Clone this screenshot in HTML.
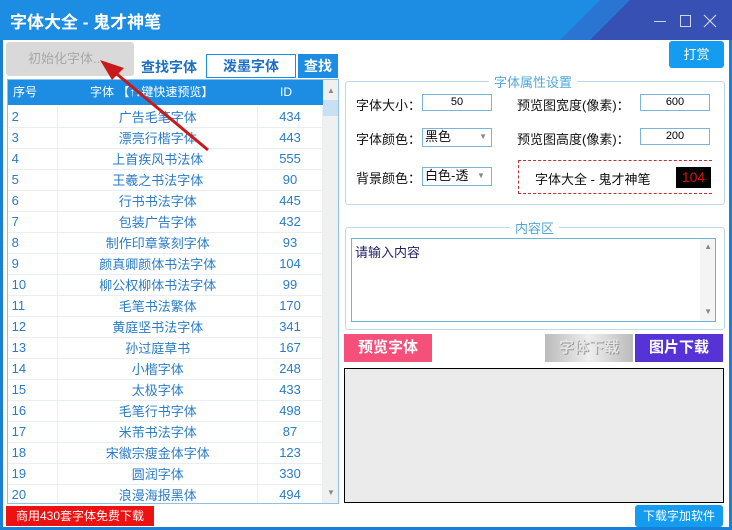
<!DOCTYPE html>
<html><head><meta charset="utf-8"><style>
*{margin:0;padding:0;box-sizing:border-box}
body{width:732px;height:530px;overflow:hidden;background:#1a7fd6;font-family:"Liberation Sans","Noto Sans CJK SC",sans-serif;position:relative}
.a{position:absolute}
#title{left:0;top:0;width:732px;height:40px;background:#1d8de3;overflow:hidden}
#body{left:3px;top:40px;width:726px;height:487px;background:#fff}
table{border-collapse:collapse;font-size:13px;color:#2a7cc8}
td{height:21px;border-bottom:1px solid #e8eef4;border-right:1px solid #e8eef4;padding:0}
.lbl{font-size:13px;color:#111}
.inp{border:1px solid #7ab4dc;height:17px;font-size:11px;text-align:center;line-height:15px;background:#fff}
.fs{border:1px solid #bcd9ea;border-radius:3px}
.leg{background:#fff;color:#4fa9d8;font-size:13px;padding:0 5px}
</style></head><body>
<div id="title" class="a">
 <svg class="a" style="left:0;top:0" width="732" height="40"><polygon points="600,0 630,0 590,40 560,40" fill="#2a74d2"/><polygon points="630,0 732,0 732,40 590,40" fill="#3650b4"/></svg>
 <div class="a" style="left:10px;top:8px;color:#fff;font-size:17px;font-weight:bold">字体大全 - 鬼才神笔</div>
 <div class="a" style="left:654px;top:21px;width:12px;height:1px;background:#cfd6ee"></div>
 <div class="a" style="left:680px;top:15px;width:11px;height:12px;border:1px solid #cfd6ee"></div>
 <svg class="a" style="left:703px;top:14px" width="14" height="14"><path d="M1 1L13 13M13 1L1 13" stroke="#cfd6ee" stroke-width="1.2"/></svg>
</div>
<div id="body" class="a"></div>
<div class="a" style="left:6px;top:42px;width:128px;height:34px;background:#d9d9d9;border-radius:3px;color:#a8a8a8;font-size:13px;line-height:34px;padding-left:22px">初始化字体....</div>
<div class="a" style="left:141px;top:57px;color:#1d6fc4;font-size:14px;font-weight:bold">查找字体</div>
<div class="a" style="left:206px;top:54px;width:90px;height:24px;border:1px solid #1d8de3;color:#1d6fc4;font-size:14px;font-weight:bold;text-align:center;line-height:22px">泼墨字体</div>
<div class="a" style="left:298px;top:54px;width:40px;height:24px;background:#1d8de3;color:#fff;font-size:14px;font-weight:bold;text-align:center;line-height:24px">查找</div>
<div class="a" style="left:7px;top:79px;width:332px;height:425px;border:1px solid #8fc0e6;overflow:hidden">
 <div class="a" style="left:0;top:0;width:315px;height:25px;background:#1d8de3;color:#fff;font-size:12px;line-height:25px">
  <span class="a" style="left:5px">序号</span><span class="a" style="left:82px">字体 【↑↓键快速预览】</span><span class="a" style="left:272px">ID</span></div>
 <div class="a" style="left:315px;top:0;width:16px;height:423px;background:#f0f0f0"></div>
 <div class="a" style="left:315px;top:20px;width:16px;height:16px;background:#c8dff4"></div>
 <div class="a" style="left:319px;top:6px;font-size:8px;color:#888">▲</div>
 <div class="a" style="left:319px;top:408px;font-size:8px;color:#888">▼</div>
 <table class="a" style="left:0;top:26px;width:315px">
 <colgroup><col style="width:50px"><col style="width:200px"><col style="width:65px"></colgroup>
 <tr><td>&nbsp;2</td><td align=center>广告毛笔字体</td><td align=center>434</td></tr>
 <tr><td>&nbsp;3</td><td align=center>漂亮行楷字体</td><td align=center>443</td></tr>
 <tr><td>&nbsp;4</td><td align=center>上首疾风书法体</td><td align=center>555</td></tr>
 <tr><td>&nbsp;5</td><td align=center>王羲之书法字体</td><td align=center>90</td></tr>
 <tr><td>&nbsp;6</td><td align=center>行书书法字体</td><td align=center>445</td></tr>
 <tr><td>&nbsp;7</td><td align=center>包装广告字体</td><td align=center>432</td></tr>
 <tr><td>&nbsp;8</td><td align=center>制作印章篆刻字体</td><td align=center>93</td></tr>
 <tr><td>&nbsp;9</td><td align=center>颜真卿颜体书法字体</td><td align=center>104</td></tr>
 <tr><td>&nbsp;10</td><td align=center>柳公权柳体书法字体</td><td align=center>99</td></tr>
 <tr><td>&nbsp;11</td><td align=center>毛笔书法繁体</td><td align=center>170</td></tr>
 <tr><td>&nbsp;12</td><td align=center>黄庭坚书法字体</td><td align=center>341</td></tr>
 <tr><td>&nbsp;13</td><td align=center>孙过庭草书</td><td align=center>167</td></tr>
 <tr><td>&nbsp;14</td><td align=center>小楷字体</td><td align=center>248</td></tr>
 <tr><td>&nbsp;15</td><td align=center>太极字体</td><td align=center>433</td></tr>
 <tr><td>&nbsp;16</td><td align=center>毛笔行书字体</td><td align=center>498</td></tr>
 <tr><td>&nbsp;17</td><td align=center>米芾书法字体</td><td align=center>87</td></tr>
 <tr><td>&nbsp;18</td><td align=center>宋徽宗瘦金体字体</td><td align=center>123</td></tr>
 <tr><td>&nbsp;19</td><td align=center>圆润字体</td><td align=center>330</td></tr>
 <tr><td>&nbsp;20</td><td align=center>浪漫海报黑体</td><td align=center>494</td></tr>
 </table>
</div>
<div class="a" style="left:6px;top:506px;width:148px;height:20px;background:#ee1111;color:#fff;font-size:12px;line-height:20px;text-align:center">商用430套字体免费下载</div>
<div class="a" style="left:669px;top:41px;width:55px;height:27px;background:#139cf0;border-radius:3px;color:#fff;font-size:13px;text-align:center;line-height:27px">打赏</div>
<div class="a fs" style="left:345px;top:81px;width:380px;height:124px"></div>
<div class="a leg" style="left:489px;top:72px">字体属性设置</div>
<div class="a lbl" style="left:356px;top:95px">字体大小：</div><div class="a inp" style="left:422px;top:94px;width:70px">50</div>
<div class="a lbl" style="left:517px;top:95px">预览图宽度(像素)：</div><div class="a inp" style="left:640px;top:94px;width:70px">600</div>
<div class="a lbl" style="left:356px;top:129px">字体颜色：</div><div class="a inp" style="left:422px;top:128px;width:70px;height:19px;text-align:left;font-size:13px;padding-left:2px;color:#111">黑色<span style="position:absolute;right:4px;font-size:8px;color:#888">▼</span></div>
<div class="a lbl" style="left:517px;top:129px">预览图高度(像素)：</div><div class="a inp" style="left:640px;top:128px;width:70px">200</div>
<div class="a lbl" style="left:356px;top:168px">背景颜色：</div><div class="a inp" style="left:422px;top:167px;width:70px;height:19px;text-align:left;font-size:13px;padding-left:2px;color:#111;overflow:hidden;white-space:nowrap">白色-透<span style="position:absolute;right:0;width:14px;background:#fff;font-size:8px;color:#888">▼</span></div>
<div class="a" style="left:518px;top:160px;width:194px;height:34px;border:1px dashed #c03030;border-right:none"></div>
<div class="a lbl" style="left:535px;top:169px">字体大全 - 鬼才神笔</div>
<div class="a" style="left:676px;top:167px;width:35px;height:21px;background:#000;color:#e01010;font-size:14px;line-height:21px;text-align:center">104</div>
<div class="a fs" style="left:345px;top:227px;width:380px;height:103px"></div>
<div class="a leg" style="left:510px;top:218px">内容区</div>
<div class="a" style="left:351px;top:238px;width:365px;height:84px;border:1px solid #6ab4d4;color:#222266;font-size:13px;padding:3px">请输入内容
 <div class="a" style="right:0;top:0;width:15px;height:82px;background:#f4f4f4"></div>
 <div class="a" style="right:3px;top:3px;font-size:8px;color:#888">▲</div><div class="a" style="right:3px;top:68px;font-size:8px;color:#888">▼</div></div>
<div class="a" style="left:344px;top:334px;width:88px;height:28px;background:#f4507a;color:#fff;font-size:15px;font-weight:bold;text-align:center;line-height:28px">预览字体</div>
<div class="a" style="left:545px;top:334px;width:88px;height:28px;background:linear-gradient(90deg,#bbb,#eee 50%,#bbb);color:#e4e4e4;font-size:15px;font-weight:bold;text-align:center;line-height:28px;text-shadow:1px 1px 0 #999">字体下载</div>
<div class="a" style="left:635px;top:334px;width:88px;height:28px;background:#5533d6;color:#fff;font-size:15px;font-weight:bold;text-align:center;line-height:28px">图片下载</div>
<div class="a" style="left:344px;top:368px;width:380px;height:135px;background:#ebebeb;border:1px solid #000"></div>
<div class="a" style="left:635px;top:505px;width:88px;height:22px;background:#139cf0;border-radius:3px;color:#fff;font-size:12px;text-align:center;line-height:22px">下载字加软件</div>
<svg class="a" style="left:0;top:0" width="732" height="530"><line x1="208" y1="150" x2="112" y2="70" stroke="#c81a1a" stroke-width="3"/><polygon points="100,60 124,68 112,80" fill="#c81a1a"/></svg>
</body></html>
